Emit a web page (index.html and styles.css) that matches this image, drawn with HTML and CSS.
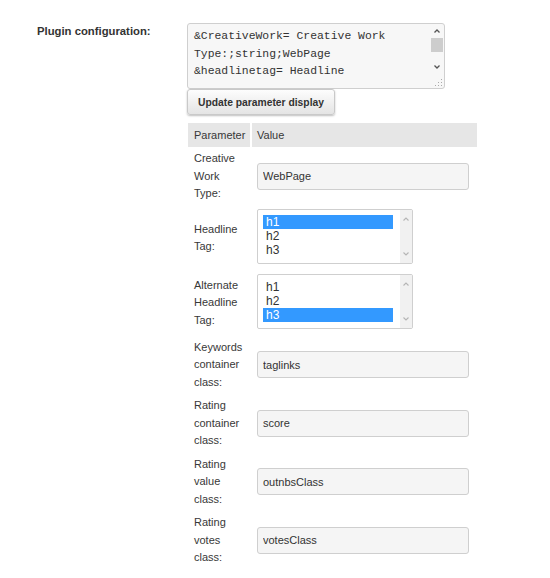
FILE: index.html
```html
<!DOCTYPE html>
<html lang="en">
<head>
<meta charset="utf-8">
<title>Plugin configuration</title>
<link rel="stylesheet" href="styles.css">
</head>
<body>
<div class="config">
  <div class="config-label">Plugin configuration:</div>
  <div class="config-body">
    <div class="textarea">
      <div class="textarea-text">&amp;CreativeWork= Creative Work<br>Type:;string;WebPage<br>&amp;headlinetag= Headline</div>
      <div class="vscroll">
        <svg class="arrow" width="14" height="14" viewBox="0 0 14 14"><path d="M4.5 8.5 L7 6 L9.5 8.5" fill="none" stroke="#555" stroke-width="1.3"/></svg>
        <div class="thumb"></div>
        <div class="track-gap"></div>
        <svg class="arrow" width="14" height="14" viewBox="0 0 14 14"><path d="M4.5 5.5 L7 8 L9.5 5.5" fill="none" stroke="#555" stroke-width="1.3"/></svg>
        <svg class="grip" width="10" height="10" viewBox="0 0 10 10"><g fill="#aaa"><rect x="7" y="1" width="1" height="1"/><rect x="4" y="4" width="1" height="1"/><rect x="7" y="4" width="1" height="1"/><rect x="1" y="7" width="1" height="1"/><rect x="4" y="7" width="1" height="1"/><rect x="7" y="7" width="1" height="1"/></g></svg>
      </div>
    </div>
    <button class="btn" type="button">Update parameter display</button>
    <table class="params">
      <thead>
        <tr><th class="col-param">Parameter</th><th class="col-value">Value</th></tr>
      </thead>
      <tbody>
        <tr>
          <td class="label">Creative Work Type:</td>
          <td class="value"><input class="field" type="text" value="WebPage"></td>
        </tr>
        <tr>
          <td class="label">Headline Tag:</td>
          <td class="value">
            <div class="listbox">
              <div class="options">
                <div class="option selected">h1</div>
                <div class="option">h2</div>
                <div class="option">h3</div>
              </div>
              <div class="lscroll">
                <svg width="12" height="12" viewBox="0 0 12 12"><path d="M3.5 7.5 L6 5 L8.5 7.5" fill="none" stroke="#b5b5b5" stroke-width="1.1"/></svg>
                <svg width="12" height="12" viewBox="0 0 12 12"><path d="M3.5 4.5 L6 7 L8.5 4.5" fill="none" stroke="#b5b5b5" stroke-width="1.1"/></svg>
              </div>
            </div>
          </td>
        </tr>
        <tr>
          <td class="label">Alternate Headline Tag:</td>
          <td class="value">
            <div class="listbox">
              <div class="options">
                <div class="option">h1</div>
                <div class="option">h2</div>
                <div class="option selected">h3</div>
              </div>
              <div class="lscroll">
                <svg width="12" height="12" viewBox="0 0 12 12"><path d="M3.5 7.5 L6 5 L8.5 7.5" fill="none" stroke="#b5b5b5" stroke-width="1.1"/></svg>
                <svg width="12" height="12" viewBox="0 0 12 12"><path d="M3.5 4.5 L6 7 L8.5 4.5" fill="none" stroke="#b5b5b5" stroke-width="1.1"/></svg>
              </div>
            </div>
          </td>
        </tr>
        <tr>
          <td class="label">Keywords container class:</td>
          <td class="value"><input class="field" type="text" value="taglinks"></td>
        </tr>
        <tr>
          <td class="label">Rating container class:</td>
          <td class="value"><input class="field" type="text" value="score"></td>
        </tr>
        <tr>
          <td class="label">Rating value class:</td>
          <td class="value"><input class="field" type="text" value="outnbsClass"></td>
        </tr>
        <tr>
          <td class="label">Rating votes class:</td>
          <td class="value"><input class="field" type="text" value="votesClass"></td>
        </tr>
      </tbody>
    </table>
  </div>
</div>
</body>
</html>
```

FILE: styles.css
```css
html, body {
  margin: 0;
  padding: 0;
  background: #fff;
}

body {
  font-family: "Liberation Sans", Arial, sans-serif;
  color: #333;
}

.config {
  display: flex;
  padding-top: 23px;
}

.config-label {
  flex: 0 0 150px;
  padding-left: 37px;
  font-size: 11.3px;
  font-weight: bold;
  line-height: 16px;
  color: #333;
}

.config-body {
  display: flex;
  flex-direction: column;
  align-items: flex-start;
}

/* textarea look-alike */
.textarea {
  box-sizing: border-box;
  width: 258px;
  height: 66px;
  display: flex;
  border: 1px solid #cfcfcf;
  border-radius: 3px;
  background: #f7f7f7;
  overflow: hidden;
}

.textarea-text {
  flex: 1;
  padding: 4px 0 0 6px;
  font-family: "Liberation Mono", "Courier New", monospace;
  font-size: 11.4px;
  line-height: 17.5px;
  color: #333;
  white-space: nowrap;
  overflow: hidden;
}

.vscroll {
  flex: 0 0 14px;
  display: flex;
  flex-direction: column;
  align-items: center;
}

.vscroll .arrow {
  display: block;
  flex: 0 0 14px;
}

.thumb {
  flex: 0 0 14px;
  width: 12px;
  background: #cdcdcd;
}

.track-gap {
  flex: 0 0 8px;
}

.grip {
  display: block;
  margin-top: auto;
  align-self: flex-end;
}

.btn {
  box-sizing: border-box;
  width: 148px;
  height: 26px;
  padding: 0;
  border: 1px solid #c9c9c9;
  border-radius: 3px;
  background: linear-gradient(#fdfdfd, #e4e4e4);
  box-shadow: 0 1px 2px rgba(0, 0, 0, 0.25);
  font-family: "Liberation Sans", Arial, sans-serif;
  font-size: 10.3px;
  font-weight: bold;
  color: #333;
}

/* parameters table */
.params {
  margin-top: 8px;
  margin-left: 1px;
  width: 289px;
  table-layout: fixed;
  border-collapse: separate;
  border-spacing: 0;
  font-size: 11px;
  color: #383838;
}

.params th {
  height: 24px;
  padding: 0;
  background: #e6e6e6;
  font-weight: normal;
  text-align: left;
  line-height: 24px;
}

.params .col-param {
  width: 56px;
  padding-left: 6px;
  border-right: 2px solid #fff;
}

.params .col-value {
  padding-left: 5px;
}

.params td {
  vertical-align: middle;
}

.params .label {
  padding: 3px 4px 3px 6px;
  line-height: 17.5px;
  border-right: 2px solid transparent;
}

.params .value {
  padding: 3px 0 3px 5px;
}

.field {
  display: block;
  box-sizing: border-box;
  width: 212px;
  height: 27px;
  margin: 0;
  padding: 0 5px;
  border: 1px solid #cfcfcf;
  border-radius: 3px;
  background: #f5f5f5;
  font-family: "Liberation Sans", Arial, sans-serif;
  font-size: 11px;
  color: #333;
  outline: none;
}

.listbox {
  box-sizing: border-box;
  width: 156px;
  height: 55px;
  margin-bottom: 4px;
  display: flex;
  border: 1px solid #cfcfcf;
  border-radius: 2px;
  background: #fff;
}

.options {
  flex: 1;
  padding: 5px 7px 0 5px;
}

.option {
  height: 14px;
  line-height: 14px;
  padding-left: 3px;
  font-size: 12px;
  color: #333;
}

.option.selected {
  background: #3399ff;
  color: #fff;
}

.lscroll {
  flex: 0 0 12px;
  display: flex;
  flex-direction: column;
  justify-content: space-between;
  padding: 3px 0;
  background: #f1f1f1;
}

.lscroll svg {
  display: block;
}
```
